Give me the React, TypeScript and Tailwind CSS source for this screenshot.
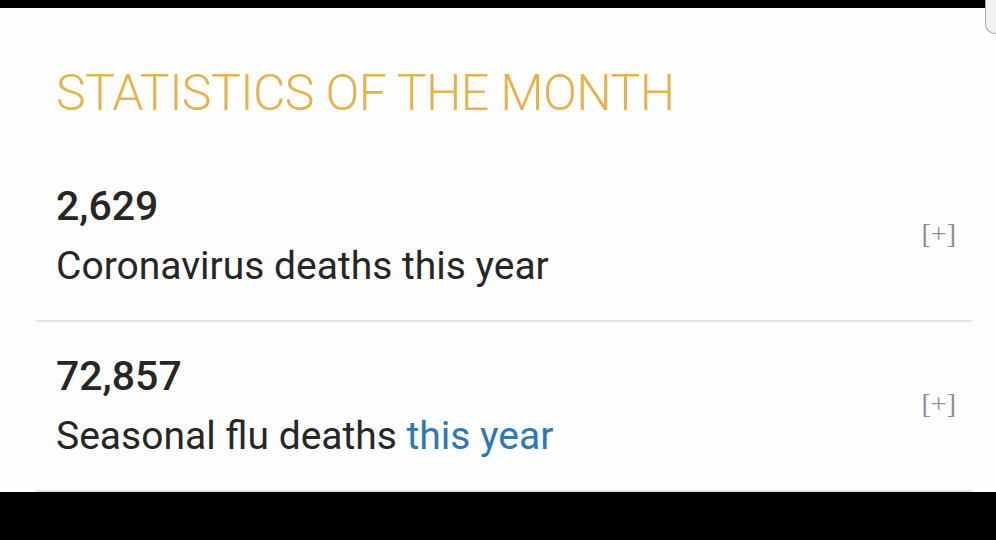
import React from 'react';

type Stat = { value: string; label: string; link?: string };

const STATS: Stat[] = [
  { value: '2,629', label: 'Coronavirus deaths this year' },
  { value: '72,857', label: 'Seasonal flu deaths ', link: 'this year' },
];

const StatRow: React.FC<{ stat: Stat }> = ({ stat }) => (
  <div className="flex h-[170px] items-center justify-between border-b-2 border-[#e4e4e4] pl-[20px] pr-[16px]">
    <div className="flex flex-col">
      <div className="text-[41px] font-medium leading-none text-[#262626]">{stat.value}</div>
      <div className="mt-[20px] text-[39px] leading-none text-[#262626]">
        {stat.label}
        {stat.link && <span className="text-[#2c79b6]">{stat.link}</span>}
      </div>
    </div>
    <span className="mb-[4px] font-['Liberation_Serif',serif] text-[28px] leading-none text-[#8f8f8f]">[+]</span>
  </div>
);

export default function App() {
  return (
    <div className="relative flex h-[540px] w-[996px] flex-col overflow-hidden bg-black font-['Roboto',sans-serif]">
      <div className="h-[8px] shrink-0" />
      <div className="flex shrink-0 flex-col bg-[#fdfdfd] pl-[36px] pr-[24px]">
        <h1 className="mt-[60px] pl-[20px] text-[50px] font-light leading-none tracking-[-0.6px] text-[#e4b34b]">
          STATISTICS OF THE MONTH
        </h1>
        <div className="mt-[34px] flex flex-col">
          {STATS.map(s => (
            <StatRow key={s.value} stat={s} />
          ))}
        </div>
      </div>
      <div className="flex-1 bg-black" />
      <div className="absolute right-0 top-0 h-[34px] w-[11px] rounded-bl-[10px] border-b border-l border-[#a8a8a8] bg-[#f2f2f2]" />
    </div>
  );
}
